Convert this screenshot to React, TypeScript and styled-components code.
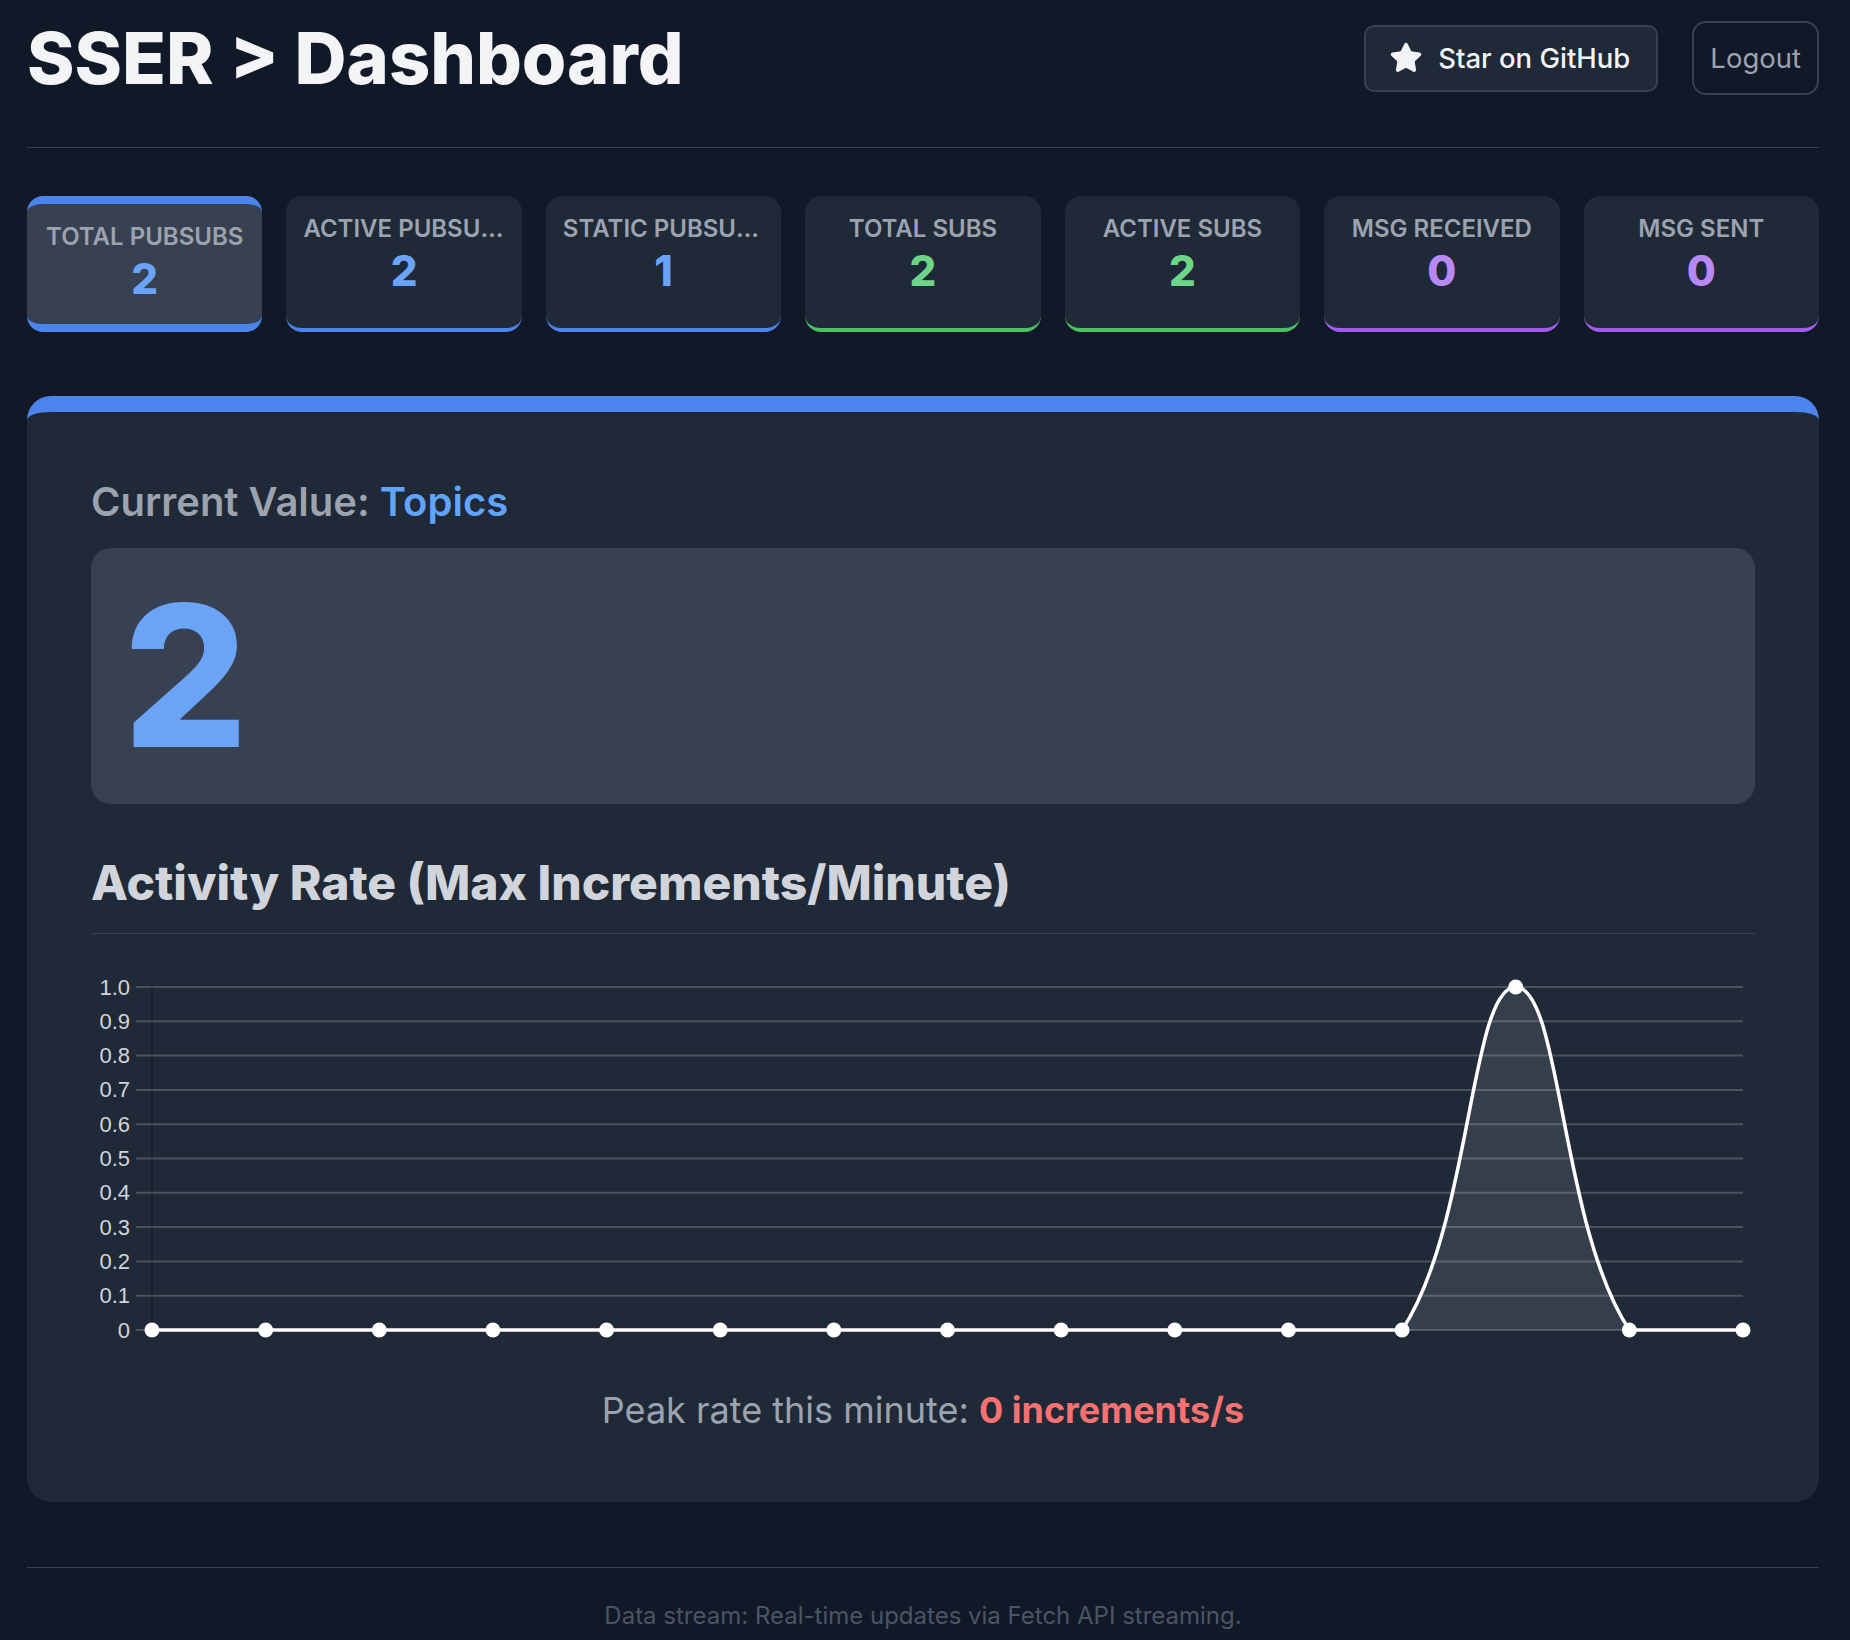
import React from 'react';
import styled, { createGlobalStyle, css } from 'styled-components';
import { Star } from 'lucide-react';

const GlobalStyle = createGlobalStyle`
  html, body { margin: 0; padding: 0; background: #111827; }
  body { font-family: Inter, "Noto Sans", sans-serif; color: #f3f4f6; }
  * { box-sizing: border-box; }
`;

const Page = styled.div`
  padding: 0 31px 4px 27px;
`;

const Header = styled.header`
  display: flex;
  align-items: center;
  justify-content: space-between;
  height: 148px;
  padding-bottom: 31px;
  border-bottom: 1px solid #374151;
`;

const Title = styled.h1`
  margin: 0;
  font-size: 72px;
  line-height: 1;
  font-weight: 800;
  color: #f3f4f6;
`;

const Actions = styled.div`
  display: flex;
  align-items: center;
  gap: 34px;
`;

const GitHubButton = styled.button`
  display: flex;
  align-items: center;
  gap: 15px;
  height: 67px;
  padding: 0 26px 0 23px;
  background: #1f2937;
  border: 2px solid #374151;
  border-radius: 10px;
  color: #f3f4f6;
  font-family: Inter, sans-serif;
  font-size: 27.5px;
  font-weight: 500;
`;

const LogoutButton = styled.button`
  height: 74px;
  padding: 0 16px;
  background: transparent;
  border: 2px solid #374151;
  border-radius: 14px;
  color: #9ca3af;
  font-family: Inter, sans-serif;
  font-size: 27.5px;
  font-weight: 400;
`;

const StatsGrid = styled.section`
  display: grid;
  grid-template-columns: repeat(7, 1fr);
  gap: 24px;
  margin-top: 48px;
`;

const StatCard = styled.div<{ $accent: string; $active?: boolean }>`
  height: 136px;
  padding: 19px 17px 0;
  border-radius: 16px;
  background: #1f2937;
  border-bottom: 4px solid ${(p) => p.$accent};
  text-align: center;
  min-width: 0;
  ${(p) =>
    p.$active &&
    css`
      background: #374151;
      border-top: 8px solid ${p.$accent};
      border-bottom-width: 8px;
    `}
`;

const StatLabel = styled.div`
  font-size: 24px;
  line-height: 1.2;
  font-weight: 600;
  color: #9ca3af;
  text-transform: uppercase;
  white-space: nowrap;
  overflow: hidden;
  text-overflow: ellipsis;
`;

const StatValue = styled.div<{ $color: string }>`
  margin-top: 2px;
  font-size: 42px;
  line-height: 1.2;
  font-weight: 800;
  color: ${(p) => p.$color};
`;

const Panel = styled.main`
  margin-top: 64px;
  background: #1f2937;
  border-radius: 24px;
  border-top: 16px solid #4b84ec;
  padding: 66px 64px 63px;
`;

const CurrentHeading = styled.h2`
  margin: 0 0 22px;
  font-size: 40px;
  line-height: 1.2;
  font-weight: 600;
  color: #9ca3af;
`;

const Accent = styled.span`
  color: #60a5fa;
`;

const BigNumberBox = styled.div`
  background: #374151;
  border-radius: 20px;
  padding: 30px 32px;
`;

const BigNumber = styled.div`
  font-size: 196px;
  line-height: 1;
  font-weight: 800;
  color: #6ba4f7;
`;

const ChartHeading = styled.h3`
  margin: 50px 0 0;
  padding-bottom: 21px;
  border-bottom: 1px solid #374151;
  font-size: 48px;
  line-height: 1.2;
  font-weight: 800;
  color: #d1d5db;
`;

const ChartSvg = styled.svg`
  display: block;
  width: 100%;
  height: 410px;
  margin-top: 12px;
`;

const PeakText = styled.p`
  margin: 26px 0 0;
  text-align: center;
  font-size: 36px;
  line-height: 1.6;
  color: #9ca3af;
`;

const PeakValue = styled.strong`
  color: #f87171;
  font-weight: 700;
`;

const Footer = styled.footer`
  margin-top: 65px;
  border-top: 1px solid #374151;
  padding-top: 30px;
  text-align: center;
  font-size: 24px;
  line-height: 1.5;
  color: #4b5563;
`;

const stats = [
  { label: 'Total PubSubs', value: '2', accent: '#4b84ec', color: '#6ba4f7', active: true },
  { label: 'Active PubSubs', value: '2', accent: '#4b84ec', color: '#6ba4f7' },
  { label: 'Static PubSubs', value: '1', accent: '#4b84ec', color: '#6ba4f7' },
  { label: 'Total Subs', value: '2', accent: '#4cbf63', color: '#6dd488' },
  { label: 'Active Subs', value: '2', accent: '#4cbf63', color: '#6dd488' },
  { label: 'Msg Received', value: '0', accent: '#a35cf0', color: '#b988f7' },
  { label: 'Msg Sent', value: '0', accent: '#a35cf0', color: '#b988f7' },
];

const W = 1664;
const L = 61;
const R = 1652;
const T = 41;
const B = 384;
const data = [0, 0, 0, 0, 0, 0, 0, 0, 0, 0, 0, 0, 1, 0, 0];

function buildChart() {
  const n = data.length;
  const pts = data.map((v, i) => ({ x: L + (i * (R - L)) / (n - 1), y: B - v * (B - T) }));
  const cap = (v: number, lo: number, hi: number) => Math.max(lo, Math.min(hi, v));
  const t = 0.4;
  const ctrl = pts.map((p, i) => {
    const prev = pts[i - 1] ?? p;
    const next = pts[i + 1] ?? p;
    const d01 = Math.hypot(p.x - prev.x, p.y - prev.y);
    const d12 = Math.hypot(next.x - p.x, next.y - p.y);
    const sum = d01 + d12;
    const s01 = sum ? d01 / sum : 0;
    const s12 = sum ? d12 / sum : 0;
    const fa = t * s01;
    const fb = t * s12;
    return {
      px: cap(p.x - fa * (next.x - prev.x), L, R),
      py: cap(p.y - fa * (next.y - prev.y), T, B),
      nx: cap(p.x + fb * (next.x - prev.x), L, R),
      ny: cap(p.y + fb * (next.y - prev.y), T, B),
    };
  });
  let d = `M${pts[0].x},${pts[0].y}`;
  for (let i = 1; i < n; i++) {
    d += ` C${ctrl[i - 1].nx},${ctrl[i - 1].ny} ${ctrl[i].px},${ctrl[i].py} ${pts[i].x},${pts[i].y}`;
  }
  const fill = `${d} L${pts[n - 1].x},${B} L${pts[0].x},${B} Z`;
  return { pts, d, fill };
}

const ticks = [1.0, 0.9, 0.8, 0.7, 0.6, 0.5, 0.4, 0.3, 0.2, 0.1, 0];

function ActivityChart() {
  const { pts, d, fill } = buildChart();
  return (
    <ChartSvg viewBox={`0 0 ${W} 410`}>
      {ticks.map((v) => {
        const y = B - v * (B - T);
        return (
          <g key={v}>
            <line x1={45} x2={R} y1={y} y2={y} stroke="rgba(255,255,255,0.2)" strokeWidth={2} />
            <text
              x={39}
              y={y}
              textAnchor="end"
              dominantBaseline="central"
              fontFamily="'Liberation Sans', Arial, sans-serif"
              fontSize={22}
              fill="#d1d5db"
            >
              {v === 0 ? '0' : v.toFixed(1)}
            </text>
          </g>
        );
      })}
      <line x1={L} x2={L} y1={T} y2={B} stroke="rgba(0,0,0,0.25)" strokeWidth={1.5} />
      <path d={fill} fill="rgba(255,255,255,0.1)" />
      <path d={d} fill="none" stroke="#ffffff" strokeWidth={3.5} />
      {pts.map((p, i) => (
        <circle key={i} cx={p.x} cy={p.y} r={7.5} fill="#ffffff" />
      ))}
    </ChartSvg>
  );
}

export default function App() {
  return (
    <>
      <GlobalStyle />
      <Page>
        <Header>
          <Title>SSER &gt; Dashboard</Title>
          <Actions>
            <GitHubButton>
              <Star size={34} fill="currentColor" strokeWidth={1.5} />
              Star on GitHub
            </GitHubButton>
            <LogoutButton>Logout</LogoutButton>
          </Actions>
        </Header>

        <StatsGrid>
          {stats.map((s) => (
            <StatCard key={s.label} $accent={s.accent} $active={s.active}>
              <StatLabel title={s.label}>{s.label}</StatLabel>
              <StatValue $color={s.color}>{s.value}</StatValue>
            </StatCard>
          ))}
        </StatsGrid>

        <Panel>
          <CurrentHeading>
            Current Value: <Accent>Topics</Accent>
          </CurrentHeading>
          <BigNumberBox>
            <BigNumber>2</BigNumber>
          </BigNumberBox>
          <ChartHeading>Activity Rate (Max Increments/Minute)</ChartHeading>
          <ActivityChart />
          <PeakText>
            Peak rate this minute: <PeakValue>0 increments/s</PeakValue>
          </PeakText>
        </Panel>

        <Footer>Data stream: Real-time updates via Fetch API streaming.</Footer>
      </Page>
    </>
  );
}
